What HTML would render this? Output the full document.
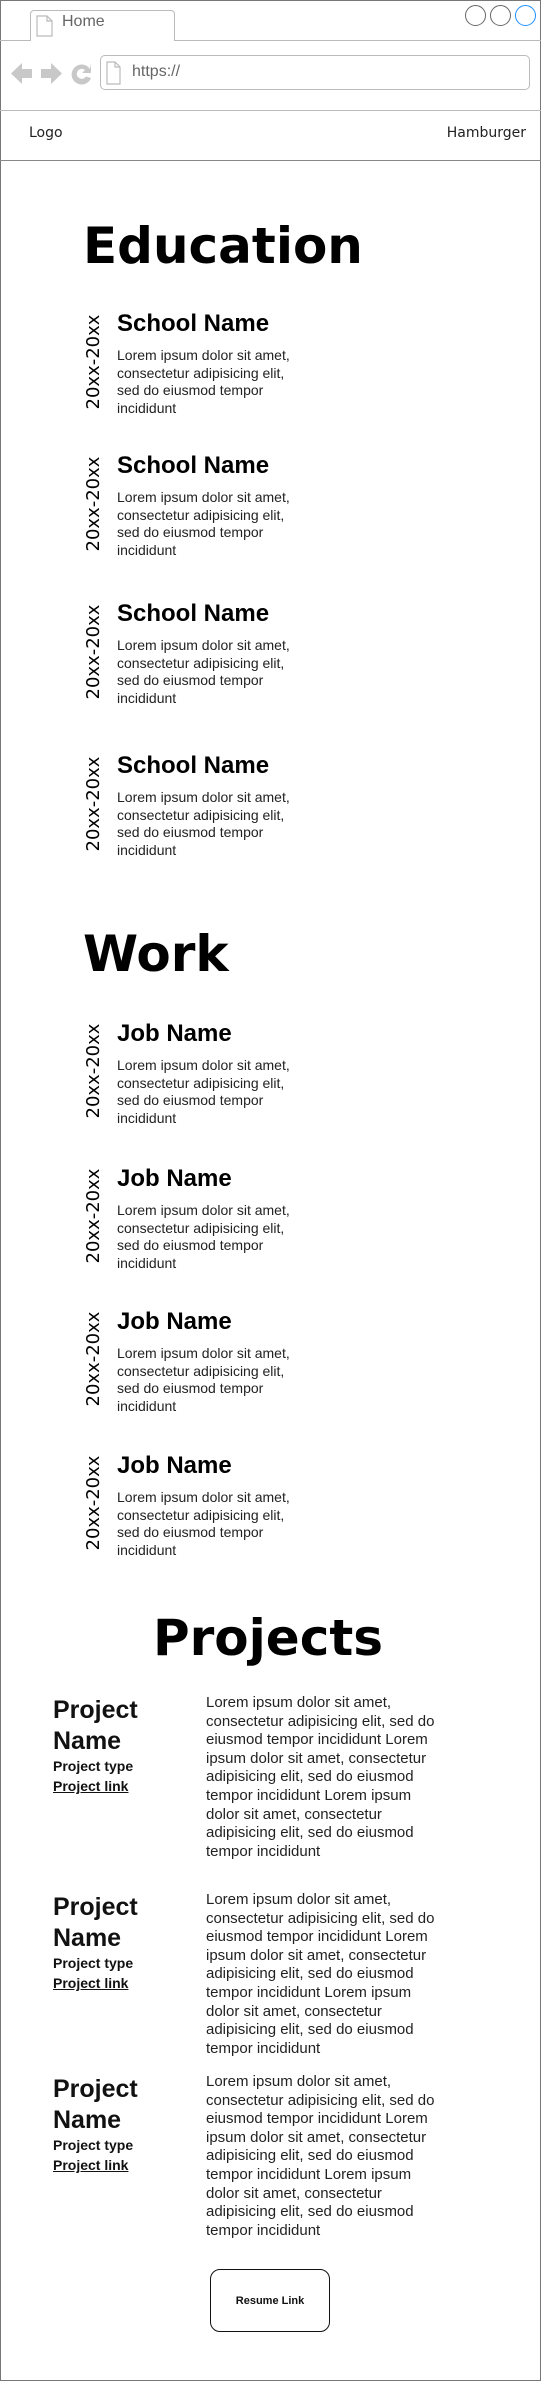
<!DOCTYPE html>
<html><head><meta charset="utf-8"><style>
*{margin:0;padding:0;box-sizing:border-box}
body{width:541px;height:2381px;position:relative;background:#fff;overflow:hidden;font-family:"Liberation Sans",Arial,sans-serif;color:#000}
.a{position:absolute;white-space:nowrap}
.frame{position:absolute;left:0;top:0;width:541px;height:2381px;border:1px solid #777}
.h{font-family:"DejaVu Sans",sans-serif;font-weight:bold;font-size:50px;line-height:50px}
.nm{font-weight:bold;font-size:24px;line-height:24px}
.lo{font-size:14px;line-height:17.5px;color:#222;white-space:normal;width:185px}
.dt{font-family:"DejaVu Sans",sans-serif;font-size:18px;line-height:18px;transform:rotate(-90deg);transform-origin:center center;width:100px;text-align:center}
.pn{font-weight:bold;font-size:25px;line-height:31px;color:#111}
.pt{font-weight:bold;font-size:14px;line-height:20px;color:#111}
.pl{font-size:15px;line-height:18.6px;color:#222;white-space:normal;width:240px}
.c{position:absolute;width:21px;height:21px;border-radius:50%;border:1.5px solid #666;top:5px}
</style></head><body>
<div class="frame"></div>
<div class="a" style="left:30px;top:10px;width:145px;height:31px;border:1px solid #bbb;border-bottom:none;border-radius:4px 4px 0 0;background:#fff"></div>
<div class="a" style="left:0;top:40px;width:30px;height:1px;background:#bbb"></div>
<div class="a" style="left:175px;top:40px;width:366px;height:1px;background:#bbb"></div>
<svg class="a" style="left:36px;top:15px" width="17" height="22" viewBox="0 0 17 22"><path d="M1 1h10l5 5v15H1z M11 1v5h5" fill="#fff" stroke="#bbb" stroke-width="1.2"/></svg>
<div class="a" style="left:62px;top:13px;font-size:16px;color:#666">Home</div>
<div class="c" style="left:465px"></div>
<div class="c" style="left:490px"></div>
<div class="c" style="left:515px;border-color:#1e90ff"></div>
<svg class="a" style="left:10px;top:61px" width="85" height="25" viewBox="0 0 85 25">
<path d="M1 12.5L12 2v6h10v9H12v6z" fill="#c8c8c8"/>
<path d="M52 12.5L41 2v6H31v9h10v6z" fill="#c8c8c8"/>
<path d="M80 8A10 10 0 1 0 81 17l-5-1.5A5 5 0 1 1 75 9l-3 3h9V2z" fill="#c8c8c8"/>
</svg>
<div class="a" style="left:100px;top:55px;width:430px;height:35px;border:1px solid #bbb;border-radius:5px"></div>
<svg class="a" style="left:106px;top:61px" width="15" height="24" viewBox="0 0 15 24"><path d="M1 1h8l5 5v17H1z M9 1v5h5" fill="#fff" stroke="#bbb" stroke-width="1.2"/></svg>
<div class="a" style="left:132px;top:63px;font-size:16px;color:#666">https://</div>
<div class="a" style="left:0;top:110px;width:541px;height:1px;background:#bbb"></div>
<div class="a" style="left:29px;top:125px;font-family:'DejaVu Sans',sans-serif;font-size:14px;color:#222">Logo</div>
<div class="a" style="right:15px;top:125px;font-family:'DejaVu Sans',sans-serif;font-size:14px;color:#222">Hamburger</div>
<div class="a" style="left:0;top:160px;width:541px;height:1px;background:#888"></div>

<div class="a h" style="left:83px;top:221px">Education</div>

<div class="a dt" style="left:44px;top:353px">20xx-20xx</div>
<div class="a nm" style="left:117px;top:312px">School Name</div>
<div class="a lo" style="left:117px;top:347px">Lorem ipsum dolor sit amet, consectetur adipisicing elit, sed do eiusmod tempor incididunt</div>

<div class="a dt" style="left:44px;top:495px">20xx-20xx</div>
<div class="a nm" style="left:117px;top:454px">School Name</div>
<div class="a lo" style="left:117px;top:489px">Lorem ipsum dolor sit amet, consectetur adipisicing elit, sed do eiusmod tempor incididunt</div>

<div class="a dt" style="left:44px;top:643px">20xx-20xx</div>
<div class="a nm" style="left:117px;top:602px">School Name</div>
<div class="a lo" style="left:117px;top:637px">Lorem ipsum dolor sit amet, consectetur adipisicing elit, sed do eiusmod tempor incididunt</div>

<div class="a dt" style="left:44px;top:795px">20xx-20xx</div>
<div class="a nm" style="left:117px;top:754px">School Name</div>
<div class="a lo" style="left:117px;top:789px">Lorem ipsum dolor sit amet, consectetur adipisicing elit, sed do eiusmod tempor incididunt</div>

<div class="a h" style="left:83px;top:929px">Work</div>

<div class="a dt" style="left:44px;top:1062px">20xx-20xx</div>
<div class="a nm" style="left:117px;top:1022px">Job Name</div>
<div class="a lo" style="left:117px;top:1057px">Lorem ipsum dolor sit amet, consectetur adipisicing elit, sed do eiusmod tempor incididunt</div>

<div class="a dt" style="left:44px;top:1207px">20xx-20xx</div>
<div class="a nm" style="left:117px;top:1167px">Job Name</div>
<div class="a lo" style="left:117px;top:1202px">Lorem ipsum dolor sit amet, consectetur adipisicing elit, sed do eiusmod tempor incididunt</div>

<div class="a dt" style="left:44px;top:1350px">20xx-20xx</div>
<div class="a nm" style="left:117px;top:1310px">Job Name</div>
<div class="a lo" style="left:117px;top:1345px">Lorem ipsum dolor sit amet, consectetur adipisicing elit, sed do eiusmod tempor incididunt</div>

<div class="a dt" style="left:44px;top:1494px">20xx-20xx</div>
<div class="a nm" style="left:117px;top:1454px">Job Name</div>
<div class="a lo" style="left:117px;top:1489px">Lorem ipsum dolor sit amet, consectetur adipisicing elit, sed do eiusmod tempor incididunt</div>

<div class="a h" style="left:0;width:536px;text-align:center;top:1613px">Projects</div>

<div class="a pn" style="left:53px;top:1695px">Project<br>Name</div>
<div class="a pt" style="left:53px;top:1756px">Project type</div>
<div class="a pt" style="left:53px;top:1776px;text-decoration:underline">Project link</div>
<div class="a pl" style="left:206px;top:1694px">Lorem ipsum dolor sit amet, consectetur adipisicing elit, sed do eiusmod tempor incididunt Lorem ipsum dolor sit amet, consectetur adipisicing elit, sed do eiusmod tempor incididunt Lorem ipsum dolor sit amet, consectetur adipisicing elit, sed do eiusmod tempor incididunt</div>

<div class="a pn" style="left:53px;top:1892px">Project<br>Name</div>
<div class="a pt" style="left:53px;top:1953px">Project type</div>
<div class="a pt" style="left:53px;top:1973px;text-decoration:underline">Project link</div>
<div class="a pl" style="left:206px;top:1891px">Lorem ipsum dolor sit amet, consectetur adipisicing elit, sed do eiusmod tempor incididunt Lorem ipsum dolor sit amet, consectetur adipisicing elit, sed do eiusmod tempor incididunt Lorem ipsum dolor sit amet, consectetur adipisicing elit, sed do eiusmod tempor incididunt</div>

<div class="a pn" style="left:53px;top:2074px">Project<br>Name</div>
<div class="a pt" style="left:53px;top:2135px">Project type</div>
<div class="a pt" style="left:53px;top:2155px;text-decoration:underline">Project link</div>
<div class="a pl" style="left:206px;top:2073px">Lorem ipsum dolor sit amet, consectetur adipisicing elit, sed do eiusmod tempor incididunt Lorem ipsum dolor sit amet, consectetur adipisicing elit, sed do eiusmod tempor incididunt Lorem ipsum dolor sit amet, consectetur adipisicing elit, sed do eiusmod tempor incididunt</div>

<div class="a" style="left:210px;top:2269px;width:120px;height:63px;border:1.3px solid #111;border-radius:10px;display:flex;align-items:center;justify-content:center;font-weight:bold;font-size:11px;color:#111">Resume Link</div>
</body></html>
